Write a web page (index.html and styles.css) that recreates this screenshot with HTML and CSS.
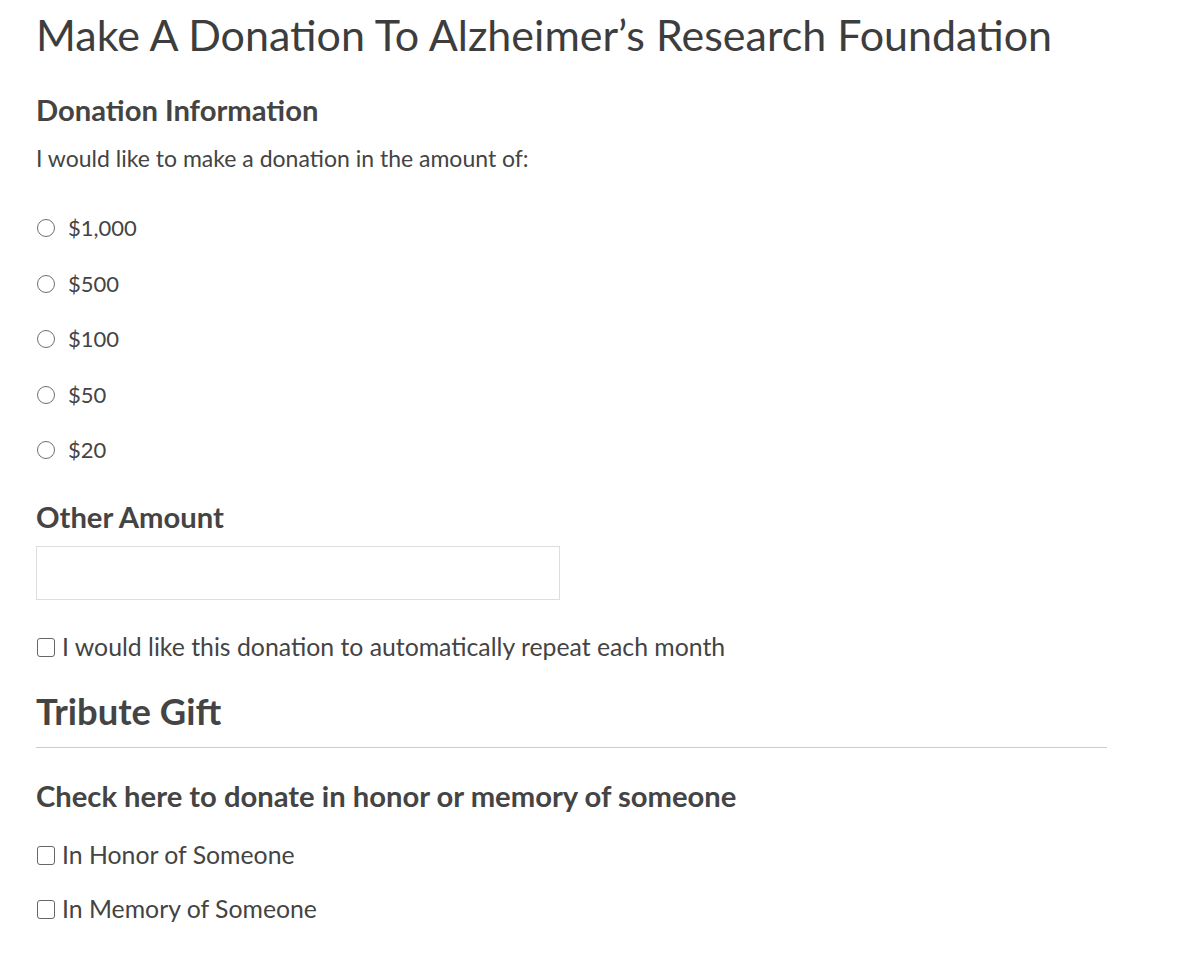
FILE: index.html
```html
<!DOCTYPE html>
<html lang="en">
<head>
    <meta charset="UTF-8">
    <meta name="viewport" content="width=device-width, initial-scale=1.0">
    <title>Donate</title>
    <link rel="stylesheet" href="styles.css">
</head>
<body>
    <div class="container">
        <h1 class="page-title">Make A Donation To Alzheimer’s Research Foundation</h1>

        <form class="donation-form">
            <!-- Amount choices -->
            <h3 class="field-title">Donation Information</h3>
            <p class="intro">I would like to make a donation in the amount of:</p>

            <div class="amounts">
                <label class="radio-row"><input type="radio" name="amount" value="1000"> $1,000</label>
                <label class="radio-row"><input type="radio" name="amount" value="500"> $500</label>
                <label class="radio-row"><input type="radio" name="amount" value="100"> $100</label>
                <label class="radio-row"><input type="radio" name="amount" value="50"> $50</label>
                <label class="radio-row"><input type="radio" name="amount" value="20"> $20</label>
            </div>

            <h3 class="field-title other-title">Other Amount</h3>
            <input type="text" class="text-input" name="other_amount">

            <label class="check-row repeat-row"><input type="checkbox" name="repeat">I would like this donation to automatically repeat each month</label>

            <!-- Tribute section -->
            <h2 class="section-title">Tribute Gift</h2>
            <hr class="divider">

            <h3 class="field-title tribute-title">Check here to donate in honor or memory of someone</h3>
            <label class="check-row honor-row"><input type="checkbox" name="honor">In Honor of Someone</label>
            <label class="check-row memory-row"><input type="checkbox" name="memory">In Memory of Someone</label>
        </form>
    </div>
</body>
</html>
```

FILE: styles.css
```css
body {
    margin: 0;
    padding: 0;
    background: #fff;
    color: #444;
    font-family: Lato, "Open Sans", sans-serif;
}
.container {
    width: 1071px;
    padding: 10.4px 0 30px 36px;
}
.page-title {
    margin: 0;
    font-size: 43px;
    line-height: 50px;
    font-weight: 400;
    color: #3d3d3d;
}
.donation-form {
    display: flex;
    flex-direction: column;
    align-items: flex-start;
}
.field-title {
    margin: 0;
    font-size: 29.2px;
    line-height: 34px;
    font-weight: 700;
}
.donation-form > .field-title:first-child {
    margin-top: 32.4px;
}
.intro {
    margin: 16.3px 0 0;
    font-size: 23px;
    line-height: 30px;
}
.amounts {
    display: flex;
    flex-direction: column;
    gap: 27.5px;
    margin-top: 41.4px;
}
.radio-row {
    display: flex;
    align-items: center;
    gap: 13px;
    font-size: 22px;
    line-height: 28px;
}
.radio-row input {
    appearance: none;
    flex-shrink: 0;
    box-sizing: border-box;
    margin: 0 0 0 1px;
    width: 18px;
    height: 18px;
    border: 1.5px solid #6f6f6f;
    border-radius: 50%;
    background: #fff;
}
.other-title {
    margin-top: 35.3px;
}
.text-input {
    margin-top: 12.2px;
    width: 524px;
    height: 54px;
    box-sizing: border-box;
    border: 1px solid #ddd;
    padding: 8px 12px;
    font: inherit;
}
.check-row {
    display: flex;
    align-items: center;
    gap: 7px;
    font-size: 24.8px;
    line-height: 30px;
}
.check-row input {
    appearance: none;
    flex-shrink: 0;
    box-sizing: border-box;
    margin: 0 0 0 1px;
    width: 18px;
    height: 19px;
    border: 1.3px solid #666;
    border-radius: 3px;
    background: #fff;
}
.repeat-row {
    margin-top: 32.4px;
}
.section-title {
    margin: 28.7px 0 0;
    font-size: 36.4px;
    line-height: 40px;
    font-weight: 700;
}
.divider {
    align-self: stretch;
    margin: 15.9px 0 0;
    height: 0;
    border: 0;
    border-top: 1px solid #ccc;
}
.tribute-title {
    margin-top: 30.8px;
}
.honor-row {
    margin-top: 27.6px;
}
.memory-row {
    margin-top: 24px;
}
```
